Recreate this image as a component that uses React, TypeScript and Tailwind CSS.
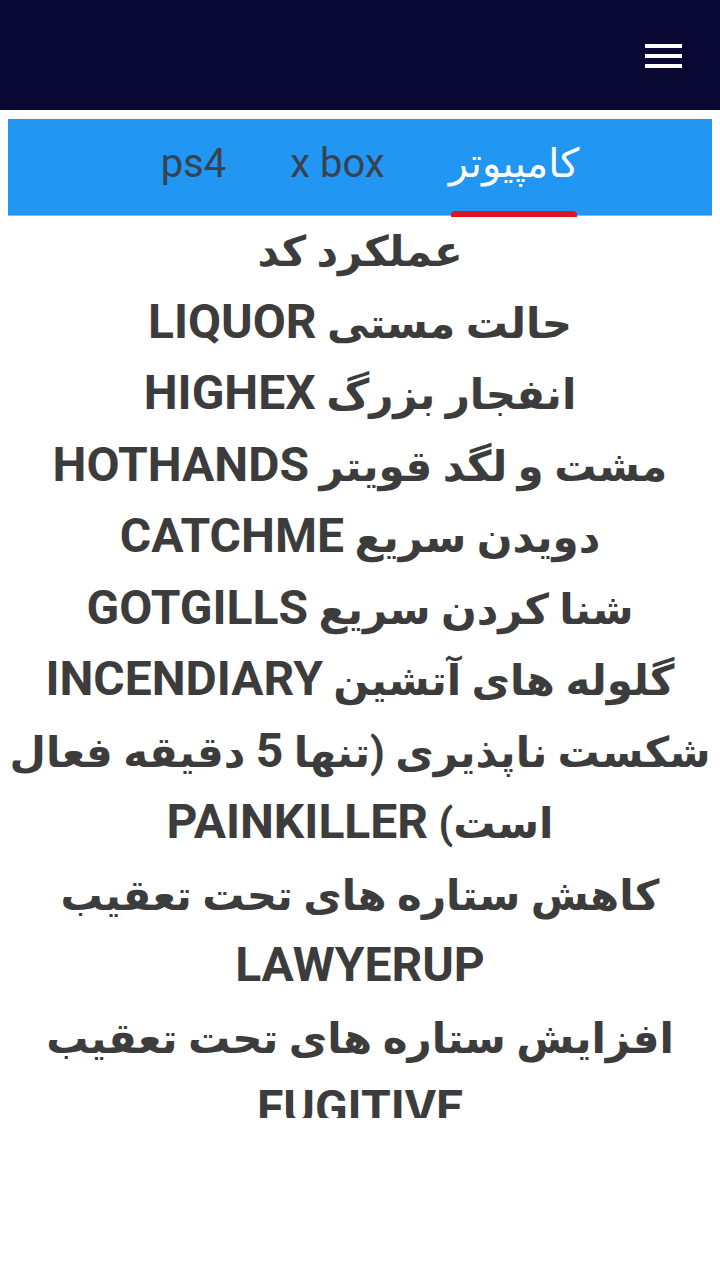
import React from "react";

const L = ({ children }: { children: React.ReactNode }) => (
  <span className="text-[48px] leading-none">{children}</span>
);

const items: React.ReactNode[] = [
  <>عملکرد کد</>,
  <>
    حالت مستی <L>LIQUOR</L>
  </>,
  <>
    انفجار بزرگ <L>HIGHEX</L>
  </>,
  <>
    مشت و لگد قویتر <L>HOTHANDS</L>
  </>,
  <>
    دویدن سریع <L>CATCHME</L>
  </>,
  <>
    شنا کردن سریع <L>GOTGILLS</L>
  </>,
  <>
    گلوله های آتشین <L>INCENDIARY</L>
  </>,
  <>
    شکست ناپذیری (تنها <L>5</L> دقیقه فعال
    <br />
    است) <L>PAINKILLER</L>
  </>,
  <>
    کاهش ستاره های تحت تعقیب
    <br />
    <L>LAWYERUP</L>
  </>,
  <>
    افزایش ستاره های تحت تعقیب
    <br />
    <L>FUGITIVE</L>
  </>,
];

export default function App() {
  return (
    <div
      className="w-[720px] h-[1280px] bg-white overflow-hidden"
      style={{ fontFamily: "Roboto, 'DejaVu Sans', sans-serif" }}
    >
      <header className="h-[110px] bg-[#080833] flex items-center justify-end pr-[38px]">
        <svg width="37" height="26" viewBox="0 0 37 26" className="mt-[4px]">
          <rect x="0" y="0" width="37" height="4" fill="#fff" />
          <rect x="0" y="10" width="37" height="4" fill="#fff" />
          <rect x="0" y="20" width="37" height="4" fill="#fff" />
        </svg>
      </header>
      <div className="px-[8px] pt-[9px]">
        <nav
          dir="rtl"
          className="h-[97px] bg-[#2196f3] flex justify-center items-stretch gap-[64px] pl-[20px] border-b border-[#7fbcea]"
        >
          <div className="relative flex items-center">
            <span className="text-[40px] text-white leading-none -mt-[6px]">کامپیوتر</span>
            <span className="absolute left-[2px] right-[2px] -bottom-[2px] h-[6px] bg-[#e0141e] rounded-t-[4px]" />
          </div>
          <div className="flex items-center">
            <span dir="ltr" className="text-[40px] text-[#3a4150] leading-none -mt-[6px]">x box</span>
          </div>
          <div className="flex items-center">
            <span dir="ltr" className="text-[40px] text-[#3a4150] leading-none -mt-[6px]">ps4</span>
          </div>
        </nav>
        <main
          dir="rtl"
          className="h-[902px] overflow-hidden text-center text-[42px] font-bold leading-[71.5px] text-[#3c3c3c]"
        >
          {items.map((it, i) => (
            <p key={i} className="whitespace-nowrap">
              {it}
            </p>
          ))}
        </main>
      </div>
    </div>
  );
}
